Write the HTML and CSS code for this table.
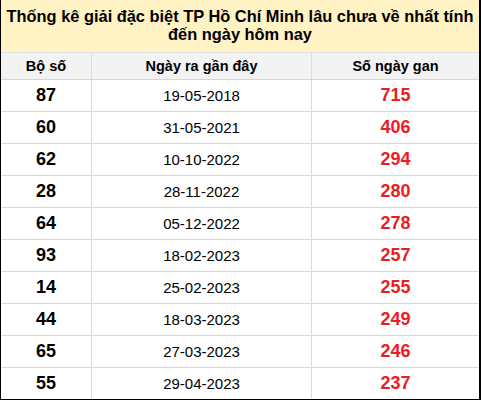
FILE: index.html
```html
<!DOCTYPE html>
<html>
<head>
<meta charset="utf-8">
<link rel="stylesheet" href="styles.css">
</head>
<body>
<div class="box">
  <div class="title">Thống kê giải đặc biệt TP Hồ Chí Minh lâu chưa về nhất tính đến ngày hôm nay</div>
  <table class="tbl">
    <thead>
      <tr><th class="c1">Bộ số</th><th class="c2">Ngày ra gần đây</th><th class="c3">Số ngày gan</th></tr>
    </thead>
    <tbody>
      <tr><td class="num">87</td><td class="date">19-05-2018</td><td class="gan">715</td></tr>
      <tr><td class="num">60</td><td class="date">31-05-2021</td><td class="gan">406</td></tr>
      <tr><td class="num">62</td><td class="date">10-10-2022</td><td class="gan">294</td></tr>
      <tr><td class="num">28</td><td class="date">28-11-2022</td><td class="gan">280</td></tr>
      <tr><td class="num">64</td><td class="date">05-12-2022</td><td class="gan">278</td></tr>
      <tr><td class="num">93</td><td class="date">18-02-2023</td><td class="gan">257</td></tr>
      <tr><td class="num">14</td><td class="date">25-02-2023</td><td class="gan">255</td></tr>
      <tr><td class="num">44</td><td class="date">18-03-2023</td><td class="gan">249</td></tr>
      <tr><td class="num">65</td><td class="date">27-03-2023</td><td class="gan">246</td></tr>
      <tr><td class="num">55</td><td class="date">29-04-2023</td><td class="gan">237</td></tr>
    </tbody>
  </table>
</div>
</body>
</html>
```
FILE: styles.css
```css
html, body {
  margin: 0;
  padding: 0;
  background: #ffffff;
}
body {
  font-family: "Liberation Sans", Arial, sans-serif;
  color: #000;
}
.box {
  width: 478px;
  height: 399px;
  border-left: 1px solid #000;
  border-right: 2px solid #000;
  border-bottom: 1px solid #000;
  overflow: hidden;
}
.title {
  height: 53px;
  box-sizing: border-box;
  background: #fff2c4;
  font-weight: bold;
  font-size: 16.4px;
  line-height: 18px;
  text-align: center;
  padding: 7px 0 0;
  border-bottom: 1px solid #e2e2e2;
}
.tbl {
  width: 100%;
  border-collapse: collapse;
  table-layout: fixed;
}
.tbl th {
  height: 26px;
  padding: 0;
  background: #f3f3f3;
  font-size: 14.5px;
  font-weight: bold;
  text-align: center;
  border-left: 1px solid #dcdcdc;
  border-bottom: 1px solid #d6d6d6;
}
.tbl th:first-child, .tbl td:first-child {
  border-left: none;
}
.c1 { width: 90px; }
.c2 { width: 219px; }
.tbl td {
  height: 31px;
  padding: 0;
  text-align: center;
  border-left: 1px solid #dcdcdc;
  border-bottom: 1px solid #d8d8d8;
}
.tbl tr:last-child td {
  border-bottom: none;
}
.num {
  font-size: 18px;
  font-weight: bold;
}
.date {
  font-size: 15px;
}
.gan {
  font-size: 18px;
  font-weight: bold;
  color: #ec1c24;
}
```
